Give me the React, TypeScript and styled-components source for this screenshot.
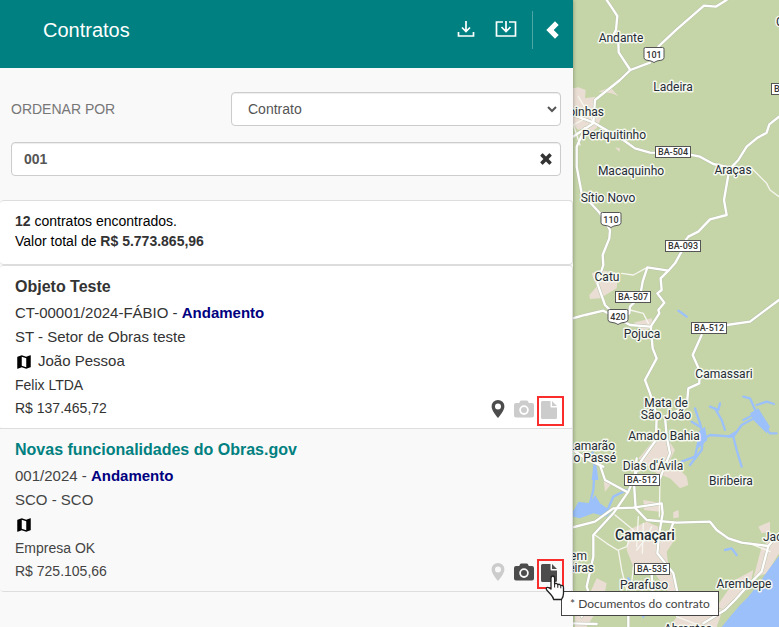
import React from "react";
import styled, { createGlobalStyle } from "styled-components";

const GlobalStyle = createGlobalStyle`
  *, *::before, *::after { box-sizing: border-box; }
  body {
    margin: 0;
    background: #f9f9f9;
    color: #333;
    font: 14px/20px "Liberation Sans", Arial, sans-serif;
  }
`;

const Page = styled.div`
  display: grid;
  grid-template-columns: 573fr 206fr;
  min-height: 100vh;
  overflow: hidden;
`;

const Sidebar = styled.main`
  position: relative;
  z-index: 1;
  min-width: 0;
  background: #f9f9f9;
  box-shadow: 0 0 4px rgba(0, 0, 0, 0.35);
`;

const Header = styled.header`
  display: flex;
  align-items: flex-start;
  height: 68px;
  padding: 10px 13px 0 43px;
  background: #008080;
  color: #fff;
`;

const Title = styled.h1`
  flex: 1;
  margin: 0;
  font-size: 20px;
  line-height: 40px;
  font-weight: 400;
`;

const HeaderActions = styled.div`
  display: flex;
  align-items: center;
  height: 40px;
`;

const IconButton = styled.button`
  display: flex;
  padding: 0;
  border: 0;
  background: none;
  color: inherit;
  cursor: pointer;
`;

const HeaderButton = styled(IconButton)`
  width: 40px;
  justify-content: center;
  padding-bottom: 3px;
`;

const CollapseButton = styled(IconButton)`
  height: 38px;
  margin-left: 6px;
  padding-left: 12px;
  align-items: center;
  border-left: 1px solid #4da6a6;
`;

const Filters = styled.form`
  display: grid;
  gap: 16px;
  padding: 24px 12px 24px 11px;
`;

const SortRow = styled.div`
  display: grid;
  grid-template-columns: 2fr 3fr;
  align-items: center;
`;

const SortLabel = styled.label`
  color: #777;
`;

const Select = styled.select`
  width: 100%;
  height: 34px;
  padding: 0 0 0 12px;
  border: 1px solid #ccc;
  border-radius: 4px;
  background: #fff;
  box-shadow: inset 0 1px 1px rgba(0, 0, 0, 0.075);
  color: #555;
  font: inherit;
`;

const SearchBox = styled.div`
  display: flex;
  align-items: center;
  height: 34px;
  padding: 0 8px 0 12px;
  border: 1px solid #ccc;
  border-radius: 4px;
  background: #fff;
  box-shadow: inset 0 1px 1px rgba(0, 0, 0, 0.075);
  color: #333;
`;

const SearchInput = styled.input`
  flex: 1;
  min-width: 0;
  padding: 0;
  border: 0;
  outline: 0;
  background: none;
  color: #555;
  font: bold 14px "Liberation Sans", Arial, sans-serif;
`;

const Summary = styled.section`
  padding: 10px 15px 13px;
  border: 1px solid #ddd;
  border-left: 0;
  border-radius: 4px;
  background: #fff;
  color: #000;

  p { margin: 0; }
  strong { color: #333; }
`;

const List = styled.ul`
  margin: 0;
  padding: 0;
  list-style: none;
  border: 1px solid #ddd;
  border-left: 0;
  border-radius: 4px;
`;

const Item = styled.li<{ $active: boolean }>`
  display: flex;
  align-items: flex-end;
  padding: 10px 8px 9px 15px;
  border-radius: 3px;
  background: ${(p) => (p.$active ? "#f9f9f9" : "#fff")};
  color: ${(p) => (p.$active ? "#444" : "#333")};

  & + & {
    border-top: 1px solid #ddd;
    border-radius: 0 0 3px 3px;
  }
`;

const Details = styled.div`
  flex: 1;
  min-width: 0;
`;

const ItemTitle = styled.h2<{ $active: boolean }>`
  margin: 0 0 3px;
  font-size: 16px;
  line-height: 22px;
  color: ${(p) => (p.$active ? "#008080" : "#333")};
`;

const Meta = styled.p`
  display: flex;
  align-items: center;
  height: 24px;
  margin: 0;
  font-size: 15px;
  white-space: pre;
`;

const Place = styled(Meta)`
  gap: 5px;
  svg {
    margin-top: 2px;
    color: #000;
  }
`;

const Small = styled(Meta)`
  height: 23px;
  font-size: 14px;
`;

const Status = styled.strong`
  color: #000080;
`;

const Actions = styled.div`
  display: flex;
  align-items: center;
  margin-bottom: -7px;
`;

const ActionButton = styled(IconButton)<{ $on: boolean }>`
  width: 26px;
  height: 30px;
  padding-bottom: 4px;
  align-items: center;
  justify-content: center;
  color: ${(p) => (p.$on ? "#4c4c4c" : "#ccc")};
`;

const DocumentButton = styled(ActionButton)`
  position: relative;
  width: 27px;
  justify-content: flex-start;
  padding: 0 0 2px 2px;
  border: 2px solid #fa2d2d;
`;

const Cursor = styled.svg`
  position: absolute;
  z-index: 3;
  left: 6px;
  top: 14px;
`;

const Tooltip = styled.span`
  position: absolute;
  z-index: 2;
  left: 22px;
  top: 30px;
  padding: 0 8px;
  border: 1px solid #444;
  background: #fff;
  color: #444;
  font: 12px/23px Lato, "Open Sans", sans-serif;
  white-space: nowrap;
`;

const MapArea = styled.aside`
  min-width: 0;
  background: #c5d5a7;
`;

const MapDrawing = styled.svg`
  display: block;
  width: 100%;
  height: 100vh;
  font-family: Roboto, sans-serif;
`;

const PlaceLabel = styled.text<{ $large?: boolean }>`
  fill: #252c35;
  stroke: #f5f8ef;
  stroke-width: 3px;
  stroke-linejoin: round;
  paint-order: stroke;
  font-size: ${(p) => (p.$large ? 14 : 12)}px;
  font-weight: ${(p) => (p.$large ? 500 : 400)};
`;

const RoadLabel = styled.text`
  fill: #333;
  font-size: 9px;
  font-weight: 500;
  text-anchor: middle;
`;

const DownloadIcon = () => (
  <svg width="18" height="18" viewBox="0 0 18 18" fill="none" stroke="currentColor" strokeWidth="1.700">
    <path d="M1.500 12v4h15v-4M9 1v10M5 7.500l4 4 4-4" />
  </svg>
);

const InboxIcon = () => (
  <svg width="22" height="18" viewBox="0 0 22 18" fill="none" stroke="currentColor" strokeWidth="1.700">
    <path d="M8 2H1.500v14h19V2H14M11 1v10M6.500 7l4.500 4.500L15.500 7" />
  </svg>
);

const ChevronIcon = () => (
  <svg width="15" height="20" viewBox="0 0 15 20" fill="currentColor">
    <path d="M10 1.300 13.700 5 8.700 10l5 5L10 18.700 1.300 10Z" />
  </svg>
);

const ClearIcon = () => (
  <svg width="12" height="12" viewBox="0 0 12 12" fill="currentColor">
    <path d="M3 .4 6 3.400 9 .4Q9.400.1 9.800.5l1.700 1.700q.4.400 0 .8L8.600 6l2.900 3q.4.400 0 .8l-1.700 1.700q-.4.400-.8 0L6 8.600l-3 2.900q-.4.400-.8 0L.5 9.800Q.1 9.400.5 9l2.900-3L.5 3Q.1 2.600.5 2.200L2.200.5Q2.600.1 3 .4Z" />
  </svg>
);

const MapIcon = () => (
  <svg width="18" height="18" viewBox="0 0 24 24" fill="currentColor">
    <path d="m20.500 3-.16.030L15 5.100 9 3 3.360 4.900c-.21.070-.36.250-.36.480V20.500c0 .28.220.5.500.5l.16-.03L9 18.900l6 2.100 5.640-1.900c.21-.07.360-.25.360-.48V3.500c0-.28-.22-.5-.5-.5zM15 19l-6-2.110V5l6 2.110V19z" />
  </svg>
);

const PinIcon = () => (
  <svg width="14" height="18" viewBox="0 0 14 18" fill="currentColor" fillRule="evenodd">
    <path d="M7 0a6.400 6.400 0 0 1 6.400 6.400C13.400 10.200 9 15.500 7 18 5 15.500.6 10.200.6 6.400A6.400 6.400 0 0 1 7 0Zm0 3.500a3 3 0 1 0 0 6 3 3 0 0 0 0-6Z" />
  </svg>
);

const CameraIcon = () => (
  <svg width="20" height="18" viewBox="0 0 20 18" fill="currentColor" fillRule="evenodd">
    <path d="M2 3h3.200l1-2Q6.500.4 7.300.4h5.400q.8 0 1.100.6l1 2H18q2 0 2 2v10.500q0 2-2 2H2q-2 0-2-2V5q0-2 2-2Zm8 2.300a4.800 4.800 0 1 0 0 9.600 4.800 4.800 0 0 0 0-9.600Zm0 1.800a3 3 0 1 1 0 6 3 3 0 0 1 0-6Z" />
  </svg>
);

const FileIcon = () => (
  <svg width="16" height="18" viewBox="0 0 16 18" fill="currentColor">
    <path d="M1.500 0H9.500v5.500q0 1 1 1H16v10q0 1.500-1.500 1.500h-13Q0 18 0 16.500v-15Q0 0 1.500 0ZM11 0l5 5h-5Z" />
  </svg>
);

const HandCursor = () => (
  <Cursor width="20" height="26" viewBox="0 0 20 26" aria-hidden="true">
    <path
      d="M6 14V3.200Q6 1 7.800 1T9.600 3.200V9q1.500-1.400 3.200.6 1.600-1.100 3 .9 2.700-.7 2.700 2.200v5.500q0 3.300-2 6.300H8.700q-.6-2.500-2.900-5L1.700 15q-.9-1.500.2-2.500 1.600-.7 4.100 1.500Z"
      fill="#fff" stroke="#222" strokeWidth="1.300" strokeLinejoin="round"
    />
    <path d="M9.600 9v3.500M12.800 9.600v3.200M15.800 10.500v2.800" fill="none" stroke="#222" />
  </Cursor>
);

const contracts = [
  {
    title: "Objeto Teste", code: "CT-00001/2024-FÁBIO", sector: "ST - Setor de Obras teste",
    place: "João Pessoa", company: "Felix LTDA", value: "R$ 137.465,72",
    active: false, pin: true, camera: false, file: false,
  },
  {
    title: "Novas funcionalidades do Obras.gov", code: "001/2024", sector: "SCO - SCO",
    place: "", company: "Empresa OK", value: "R$ 725.105,66",
    active: true, pin: false, camera: true, file: true,
  },
];

type Label = [string, number, number, ("start" | "middle" | "end")?, boolean?];

const labels: Label[] = [
  ["Andante", 48, 42], ["Ladeira", 100, 91], ["Alagoinhas", 31, 116, "end"],
  ["Periquitinho", 41, 139], ["Macaquinho", 58, 175], ["Araças", 160, 174],
  ["Sítio Novo", 35, 202], ["Catu", 34, 281], ["Pojuca", 69, 338],
  ["Camassari", 151, 378], ["Mata de", 93, 407], ["São João", 93, 419],
  ["Amado Bahia", 91, 440], ["Lamarão", 42, 450, "end"], ["do Passé", 43, 462, "end"],
  ["Dias d'Ávila", 80, 470], ["Biribeira", 158, 485], ["Camaçari", 72, 540, "middle", true],
  ["Jacuípe", 190, 541, "start"], ["em", 14, 560, "end"], ["eiras", 21, 572, "end"],
  ["Parafuso", 71, 589], ["Arembepe", 171, 588], ["Abrantes", 115, 633], ["C", 203, 26, "start"],
];

const plates: [string, number, number][] = [
  ["BA-504", 100, 152], ["BA-093", 110, 246], ["BA-507", 60, 297],
  ["BA-512", 136, 328], ["BA-512", 69, 480], ["BA-535", 79, 569], ["BA-400", 216, 89],
];

const shields: [string, number, number][] = [["101", 81, 55], ["110", 38, 220], ["420", 45, 317]];

// Geometry is drawn at three units per map pixel.
const urban = [
  "M9 265 25 262 47 270 45 295 75 290 80 330 100 340 80 385 62 396 40 385 25 390 9 375Z",
  "M85 275 120 262 145 288 125 280Z", "M135 442 150 445 148 456Z",
  "M65 820 90 810 145 820 140 865 90 895 60 897 58 885 80 860Z",
  "M190 968 245 955 250 985 215 990Z",
  "M210 1370 255 1315 295 1320 315 1350 300 1380 350 1430 355 1455 330 1465 300 1435 260 1420 205 1375Z",
  "M100 1430 125 1450 105 1475Z",
  "M175 1590 230 1565 265 1580 270 1620 320 1610 290 1655 295 1695 320 1740 325 1790 290 1770 240 1700 190 1700 170 1650Z",
  "M220 1500 275 1510 270 1535 222 1530Z", "M310 1537 325 1530 327 1552 310 1555Z",
  "M565 1580 600 1565 600 1595 575 1600Z",
  "M575 1640 627 1600 627 1660 590 1720 550 1735Z",
  "M495 1740 550 1710 540 1760 470 1830 440 1820Z",
  "M80 1735 110 1750 100 1800 50 1881 15 1881 15 1820 55 1790Z",
  "M320 1850 460 1825 440 1881 300 1881Z",
];

const majorRoads = [
  "M110 0 125 22 142 48 138 90 128 108 145 125 146 157 181 210 150 240 75 300 70 370 9 410",
  "M470 0 437 20 402 17 320 88 265 140M240 188 181 210",
  "M9 345 72 368 160 420 195 445 240 458 340 460 390 470 430 492 480 503",
  "M627 350 598 373 590 398 560 415 530 440 505 480 478 508 462 600 470 645 420 658 385 695 355 710",
  "M45 385 20 440 20 500 35 580 90 640 120 690 118 715 98 765 100 795 82 850 105 915 125 935",
  "M340 745 315 790 295 812 272 835 275 870 262 880 283 908 265 930 268 940 242 980 248 1045 260 1075 225 1140 240 1180 260 1245 258 1320 212 1385 175 1475 130 1540 70 1605 70 1670 50 1760 60 1790 35 1850",
  "M355 710 325 750M295 812 232 802 218 845 210 890 180 920 178 940 140 950",
  "M9 955 45 945 100 932 180 975 240 980", "M627 900 600 920 540 965 470 975M395 1005 368 1065 388 1110 388 1150 355 1165 350 1220 285 1250 290 1310 300 1360 270 1435",
  "M9 1582 75 1565 130 1525 190 1523 275 1510 278 1540 268 1600 262 1660 310 1720 325 1790",
  "M200 1375 192 1450 197 1525 230 1560 320 1568 420 1565 440 1590 475 1615 515 1628 595 1638 627 1600",
  "M595 1638 575 1715 540 1750 495 1800 465 1830 400 1870",
  "M175 1780 175 1881M245 1720 248 1780M90 1395 105 1440 170 1475M9 1350 55 1380 100 1400M9 1870 80 1872M310 1568 295 1610",
];

const minorRoads = [
  "M135 1545 190 1590 170 1640 145 1650 155 1710 170 1770M205 1550 200 1640M220 1570 217 1660M245 1580 225 1620 200 1650M268 1600 245 1620",
  "M75 1605 110 1630 142 1650M540 1630 600 1655M545 505 590 550 600 570 627 590M155 820 190 825 232 802M180 930 220 940 235 970",
  "M45 355 10 375 30 435M190 1700 185 1750M270 1435 268 1550M25 290 70 365M320 1850 400 1881",
];

const rivers = [
  "M335 1385 375 1370 385 1325 420 1305 490 1310 515 1275 560 1250 600 1300 620 1300",
  "M375 1225 390 1270 400 1310M365 1265 390 1280M435 1225 455 1260 465 1290M520 1260 560 1240 540 1195 520 1190M560 1215 590 1205 612 1212M490 1310 500 1350 515 1400M400 1310 395 1350 360 1395M500 1295 475 1310M420 1220 445 1230 450 1210",
  "M75 1395 70 1470 60 1510M9 1540 30 1515 110 1535 130 1490 170 1470M175 1735 190 1760M210 1800 220 1850M465 1650 485 1645 500 1665M325 932 350 950",
];

const MapView = () => (
  <MapDrawing viewBox="0 0 206 627" preserveAspectRatio="xMinYMin slice" role="img" aria-label="Mapa">
    <rect width="206" height="627" fill="#c5d5a7" />
    <g transform="translate(-3 0) scale(0.33333)" strokeLinejoin="round" strokeLinecap="round">
      {urban.map((d) => <path key={d} d={d} fill="#eaded4" />)}
      <path d="M627 1668 595 1710 567 1750 535 1790 510 1815 480 1850 455 1881H627ZM9 1535 25 1505 60 1510 75 1485 90 1510 125 1535 110 1550 70 1540 30 1555 9 1550ZM70 1350 80 1400 85 1440 65 1440 70 1395 55 1370ZM380 1300 405 1280 412 1320 385 1345ZM540 1240 565 1225 600 1280 590 1300 550 1260Z" fill="#9cc0f9" />
      <g fill="none" stroke="#9cc0f9" strokeWidth="7">
        {rivers.map((d) => <path key={d} d={d} />)}
      </g>
      <g fill="none">
        {majorRoads.map((d) => <path key={d} d={d} stroke="#b9c2ac" strokeWidth="10" />)}
        {minorRoads.map((d) => <path key={d} d={d} stroke="#f6f5ef" strokeWidth="4" />)}
        {majorRoads.map((d) => <path key={`${d}-top`} d={d} stroke="#fff" strokeWidth="7" />)}
      </g>
    </g>
    {plates.map(([name, x, y]) => (
      <g key={name + y}>
        <rect x={x - 17.5} y={y - 5.5} width="35" height="11" fill="#fff" stroke="#555" />
        <RoadLabel x={x} y={y + 3}>{name}</RoadLabel>
      </g>
    ))}
    {shields.map(([name, x, y]) => (
      <g key={name}>
        <path
          transform={`translate(${x} ${y})`}
          d="M-8.500-7.500h17q2 0 1.500 2v8q0 2-2 2.500L3 6Q0 9-3 6l-5-1q-2-.5-2-2.500v-8q-.5-2 1.500-2Z"
          fill="#fff" stroke="#555"
        />
        <RoadLabel x={x} y={y + 3}>{name}</RoadLabel>
      </g>
    ))}
    {labels.map(([name, x, y, anchor = "middle", large]) => (
      <PlaceLabel key={name} x={x} y={y} textAnchor={anchor} $large={large}>{name}</PlaceLabel>
    ))}
  </MapDrawing>
);

export default function App() {
  return (
    <>
      <GlobalStyle />
      <Page>
        <Sidebar>
          <Header>
            <Title>Contratos</Title>
            <HeaderActions>
              <HeaderButton aria-label="Baixar"><DownloadIcon /></HeaderButton>
              <HeaderButton aria-label="Importar"><InboxIcon /></HeaderButton>
              <CollapseButton aria-label="Recolher painel"><ChevronIcon /></CollapseButton>
            </HeaderActions>
          </Header>
          <Filters onSubmit={(e) => e.preventDefault()}>
            <SortRow>
              <SortLabel htmlFor="sort">ORDENAR POR</SortLabel>
              <Select id="sort" defaultValue="Contrato"><option>Contrato</option></Select>
            </SortRow>
            <SearchBox>
              <SearchInput type="text" aria-label="Pesquisar contratos" defaultValue="001" />
              <IconButton type="button" aria-label="Limpar"><ClearIcon /></IconButton>
            </SearchBox>
          </Filters>
          <Summary>
            <p><strong>12</strong> contratos encontrados.</p>
            <p>Valor total de <strong>R$ 5.773.865,96</strong></p>
          </Summary>
          <List>
            {contracts.map((c) => (
              <Item key={c.code} $active={c.active}>
                <Details>
                  <ItemTitle $active={c.active}>{c.title}</ItemTitle>
                  <Meta>{c.code} - <Status>Andamento</Status></Meta>
                  <Meta>{c.sector}</Meta>
                  <Place><MapIcon />{c.place}</Place>
                  <Small>{c.company}</Small>
                  <Small>{c.value}</Small>
                </Details>
                <Actions>
                  <ActionButton $on={c.pin} aria-label="Localização"><PinIcon /></ActionButton>
                  <ActionButton $on={c.camera} aria-label="Fotos"><CameraIcon /></ActionButton>
                  <DocumentButton $on={c.file} aria-label="Documentos do contrato">
                    <FileIcon />
                    {c.active && <HandCursor />}
                    {c.active && <Tooltip role="tooltip">* Documentos do contrato</Tooltip>}
                  </DocumentButton>
                </Actions>
              </Item>
            ))}
          </List>
        </Sidebar>
        <MapArea><MapView /></MapArea>
      </Page>
    </>
  );
}
